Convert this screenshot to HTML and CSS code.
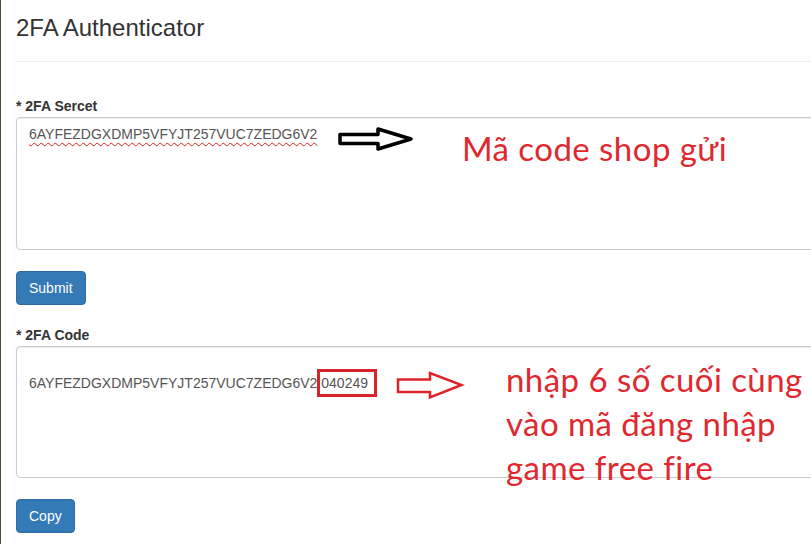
FILE: index.html
```html
<!DOCTYPE html>
<html lang="vi">
<head>
<meta charset="utf-8">
<title>2FA Authenticator</title>
<link rel="stylesheet" href="styles.css">
</head>
<body>
<div class="page">
  <h3 class="title">2FA Authenticator</h3>
  <hr class="divider">
  <form class="form">
    <label class="label">* 2FA Sercet</label>
    <div class="field field-secret">
      <span class="misspelled">6AYFEZDGXDMP5VFYJT257VUC7ZEDG6V2</span>
      <svg class="arrow arrow-black" width="80" height="28" viewBox="0 0 80 28">
        <polygon points="4,9.5 42,9.5 42,4 75,14 42,24 42,18.5 4,18.5" fill="#fff" stroke="#000" stroke-width="3.5" stroke-linejoin="round"/>
      </svg>
      <div class="note note-1">Mã code shop gửi</div>
    </div>
    <button type="button" class="btn">Submit</button>

    <label class="label label-2">* 2FA Code</label>
    <div class="field field-code">
      <div class="line">&nbsp;</div>
      <div class="line">6AYFEZDGXDMP5VFYJT257VUC7ZEDG6V2 <span class="boxed">040249</span></div>
      <svg class="arrow arrow-red" width="72" height="34" viewBox="0 0 72 34">
        <polygon points="4,10.5 36,10.5 36,4 67.5,16 36,28.5 36,23 4,23" fill="#fff" stroke="#dd2229" stroke-width="2.5" stroke-linejoin="miter"/>
      </svg>
      <div class="note note-2">nhập 6 số cuối cùng<br>vào mã đăng nhập<br>game free fire</div>
    </div>
    <button type="button" class="btn">Copy</button>
  </form>
</div>
</body>
</html>
```
FILE: styles.css
```css
html, body {
  margin: 0;
  padding: 0;
  background: #fff;
  overflow: hidden;
}
body {
  width: 811px;
  height: 544px;
  font-family: "Liberation Sans", Arial, sans-serif;
  color: #333;
}
.page {
  border-left: 1px solid #4f4d36;
  padding-left: 15px;
  height: 544px;
  box-sizing: border-box;
}
.title {
  margin: 0;
  padding-top: 15px;
  font-size: 24px;
  line-height: 26px;
  font-weight: normal;
  color: #333;
}
.divider {
  margin: 20px 0 0 0;
  border: 0;
  border-top: 1px solid #eee;
  height: 0;
}
.form {
  display: flex;
  flex-direction: column;
  align-items: flex-start;
}
.label {
  margin-top: 34px;
  margin-bottom: 1px;
  font-size: 14px;
  line-height: 20px;
  font-weight: bold;
  color: #333;
}
.label-2 {
  margin-top: 20px;
}
.field {
  position: relative;
  width: 830px;
  box-sizing: border-box;
  border: 1px solid #ccc;
  border-radius: 4px;
  padding: 6px 12px;
  font-size: 14px;
  line-height: 20px;
  color: #555;
  box-shadow: inset 0 1px 1px rgba(0,0,0,.075);
  background: #fff;
}
.field-secret {
  height: 133px;
}
.field-code {
  height: 132px;
}
.misspelled {
  text-decoration: underline wavy #e02020;
  text-decoration-thickness: 1px;
  text-underline-offset: 3px;
}
.boxed {
  position: relative;
}
.boxed::after {
  content: "";
  position: absolute;
  left: -4px;
  right: -9px;
  top: -6px;
  bottom: -6px;
  border: 3px solid #d8232b;
}
.arrow {
  position: absolute;
  display: block;
}
.arrow-black {
  left: 319px;
  top: 7px;
}
.arrow-red {
  left: 377px;
  top: 22px;
}
.note {
  position: absolute;
  font-family: Lato, "Open Sans", sans-serif;
  font-size: 33px;
  line-height: 44px;
  letter-spacing: 0.45px;
  color: #e0282e;
  white-space: nowrap;
}
.note-1 {
  left: 445px;
  top: 8px;
}
.note-2 {
  left: 489px;
  top: 10px;
}
.btn {
  margin-top: 21px;
  background: #337ab7;
  border: 1px solid #2e6da4;
  border-radius: 4px;
  color: #fff;
  font-family: "Liberation Sans", Arial, sans-serif;
  font-size: 14px;
  line-height: 20px;
  padding: 6px 12px;
  cursor: pointer;
}
```
